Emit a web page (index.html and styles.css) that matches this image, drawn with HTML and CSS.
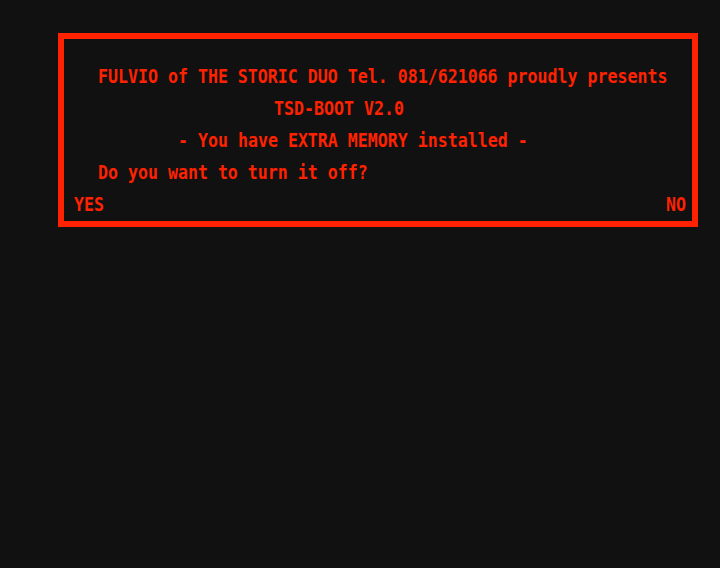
FILE: index.html
```html
<!DOCTYPE html>
<html lang="en">
<head>
<meta charset="utf-8">
<title>TSD-BOOT</title>
<link rel="stylesheet" href="styles.css">
</head>
<body>
<div class="screen">
  <div class="alert">
    <p class="line l1">FULVIO of THE STORIC DUO Tel. 081/621066 proudly presents</p>
    <p class="line l2">TSD-BOOT V2.0</p>
    <p class="line l3">- You have EXTRA MEMORY installed -</p>
    <p class="line l4">Do you want to turn it off?</p>
    <div class="line choices"><span>YES</span><span>NO</span></div>
  </div>
</div>
</body>
</html>
```
FILE: styles.css
```css
html, body {
  margin: 0;
  padding: 0;
  background: #111111;
}
.screen {
  width: 720px;
  height: 568px;
  background: #111111;
  padding: 33px 0 0 58px;
  box-sizing: border-box;
}
.alert {
  width: 640px;
  height: 194px;
  box-sizing: border-box;
  border: 6px solid #ff2200;
  padding-top: 22px;
  color: #ff2200;
  font-family: "DejaVu Sans Mono", "Liberation Mono", monospace;
  font-weight: bold;
  font-size: 16.6px;
}
.line {
  margin: 0;
  height: 32px;
  line-height: 32px;
  white-space: pre;
  transform: scaleY(1.16);
}
.l1 { padding-left: 34px; }
.l2 { padding-left: 210px; }
.l3 { padding-left: 114px; }
.l4 { padding-left: 34px; }
.choices {
  display: flex;
  justify-content: space-between;
  padding: 0 6px 0 10px;
}
```
